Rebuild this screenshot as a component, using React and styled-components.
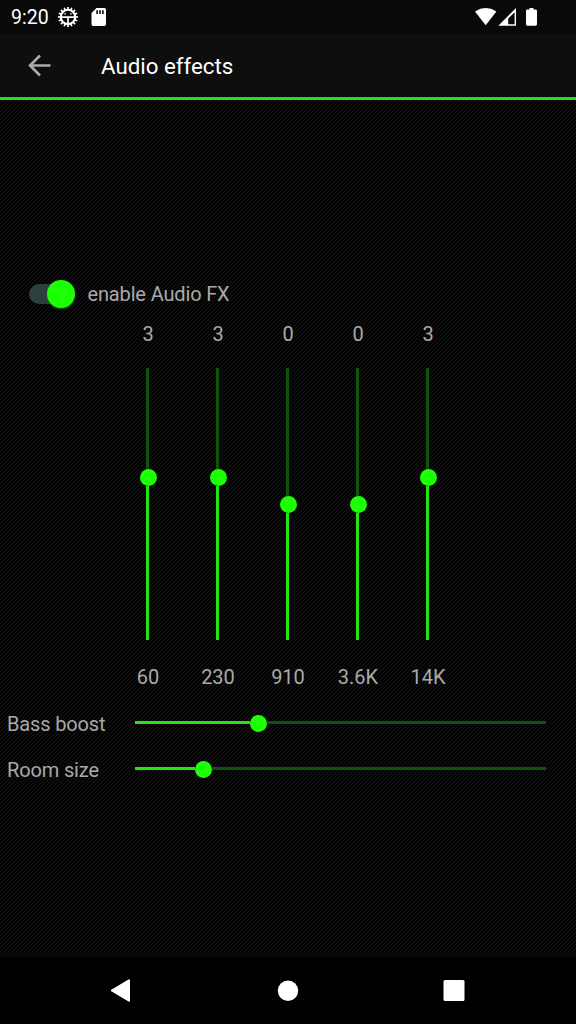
import React from "react";
import styled, { createGlobalStyle } from "styled-components";

const GlobalStyle = createGlobalStyle`
  *, *::before, *::after { box-sizing: border-box; }
  body { margin: 0; background: #000; font-family: Roboto, sans-serif; }
`;

const GREEN = "#1cff05";

const Screen = styled.div`
  display: flex;
  flex-direction: column;
  width: 576px;
  height: 1024px;
  overflow: hidden;
  color: #a9a9a9;
`;

const StatusBar = styled.header`
  display: flex;
  align-items: center;
  justify-content: space-between;
  height: 34px;
  flex: none;
  padding: 0 38px 0 11px;
  background: #090909;
  color: #fff;
`;

const StatusGroup = styled.div`
  display: flex;
  align-items: center;
  svg { display: block; }
`;

const Clock = styled.span`
  width: 46px;
  padding-top: 2px;
  font-size: 19.5px;
  line-height: 32px;
  white-space: nowrap;
`;

const AppBar = styled.div`
  display: flex;
  align-items: center;
  height: 66px;
  flex: none;
  padding-left: 27px;
  background: #0e0e0e;
  border-bottom: 3px solid #29df19;
`;

const BackButton = styled.button`
  width: 74px;
  padding: 0;
  border: 0;
  background: none;
  color: #aaa;
  svg { display: block; }
`;

const Title = styled.h1`
  margin: 0;
  color: #fff;
  font-size: 22.3px;
  font-weight: 400;
  line-height: 30px;
`;

const Content = styled.main`
  flex: 1;
  display: flex;
  flex-direction: column;
  padding-top: 177px;
  background: url("data:image/svg+xml,%3Csvg xmlns='http://www.w3.org/2000/svg' width='4' height='4'%3E%3Cpath d='M-1 1L1-1M0 4L4 0M3 5L5 3' stroke='%23131313' stroke-width='1.1'/%3E%3C/svg%3E") #000;
`;

const SwitchRow = styled.label`
  display: flex;
  align-items: center;
  height: 33px;
  padding-left: 29px;
  font-size: 20px;
`;

const SwitchTrack = styled.span`
  display: flex;
  align-items: center;
  justify-content: flex-end;
  width: 46px;
  height: 20px;
  margin-right: 12.5px;
  border-radius: 10px;
  background: linear-gradient(90deg, #2d403f 0 34px, transparent 34px);
`;

const SwitchThumb = styled.span`
  width: 28px;
  height: 28px;
  border-radius: 50%;
  background: ${GREEN};
  box-shadow: 0 1px 2px rgba(18, 120, 8, 0.8);
`;

const SwitchText = styled.span`
  line-height: 24px;
  padding-top: 1px;
  letter-spacing: -0.15px;
`;

const Equalizer = styled.section`
  display: flex;
  align-self: center;
  margin-top: 12px;
`;

const Band = styled.div`
  display: flex;
  flex-direction: column;
  align-items: center;
  width: 70px;
  font-size: 20px;
  line-height: 24px;
`;

const VerticalSlider = styled.div`
  display: flex;
  flex-direction: column;
  align-items: center;
  width: 17px;
  height: 272px;
  margin: 22px 0 25px;
`;

const HorizontalSlider = styled.div`
  display: flex;
  align-items: center;
  width: 411px;
  height: 17px;
`;

const Track = styled.span`
  flex: ${(p) => (p.$size === undefined ? "1" : `0 0 ${p.$size}px`)};
  ${(p) => (p.$vertical ? "width: 3px; margin-right: 0.6px;" : "height: 3px; margin-bottom: 0.6px;")}
  background: ${(p) => (p.$active ? "#24e516" : "#10520c")};
`;

const Thumb = styled.span`
  flex: none;
  width: 17px;
  height: 17px;
  border-radius: 50%;
  background: ${GREEN};
`;

const EffectList = styled.section`
  display: flex;
  flex-direction: column;
  margin-top: 11px;
`;

const EffectRow = styled.div`
  display: flex;
  align-items: center;
  height: 46px;
`;

const EffectLabel = styled.span`
  width: 135px;
  padding: 1px 0 0 7px;
  font-size: 20px;
  line-height: 24px;
  letter-spacing: -0.15px;
`;

const NavBar = styled.nav`
  display: flex;
  align-items: center;
  justify-content: center;
  height: 67px;
  flex: none;
  background: #000;
`;

const NavButton = styled.button`
  display: flex;
  justify-content: center;
  width: 166px;
  padding: 0;
  border: 0;
  background: none;
`;

const bands = [
  { gain: "3", freq: "60", rest: 101 },
  { gain: "3", freq: "230", rest: 101 },
  { gain: "0", freq: "910", rest: 128 },
  { gain: "0", freq: "3.6K", rest: 128 },
  { gain: "3", freq: "14K", rest: 101 },
];

const effects = [
  { name: "Bass boost", level: 115 },
  { name: "Room size", level: 60 },
];

const teeth = Array.from({ length: 16 }, (_, i) => i * 22.5);

function GearIcon() {
  return (
    <svg width="22" height="22" viewBox="-11 -11 22 22" fill="none" stroke="#fff">
      {teeth.map((a) => (
        <path key={a} d="M0-10V-7" strokeWidth="1.7" transform={`rotate(${a})`} />
      ))}
      <circle r="7.2" strokeWidth="2.1" />
      <path d="M-7 .2H7M0 0V7" strokeWidth="1.7" />
      <path d="M-3.6-3.1h1.5M2.1-3.1h1.5" strokeWidth="1.3" />
    </svg>
  );
}

function SdIcon() {
  return (
    <svg width="16" height="20" viewBox="0 0 16 20">
      <path
        fill="#fff"
        fillRule="evenodd"
        d="M5.5 1H13.4Q15 1 15 2.6V17.3Q15 19 13.4 19H2.1Q.5 19 .5 17.3V6ZM5.3 3.3V7H6.9V3.3ZM8.2 3.3V7H9.8V3.3ZM11.1 3.3V7H12.7V3.3Z"
      />
    </svg>
  );
}

function SignalIcons() {
  return (
    <svg width="63" height="20" viewBox="0 0 63 20" fill="#fff">
      <path d="M0 4.4Q10.7-2.5 21.4 4.4L10.7 18.2Z" />
      <path fillRule="evenodd" d="M41 1V18.7H23.3ZM39.6 5.2L33.2 11.6V17.2H39.6Z" />
      <path d="M54.5 1H58.5V2.6H60.6Q62 2.6 62 4V17.3Q62 18.7 60.6 18.7H52.4Q51 18.7 51 17.3V4Q51 2.6 52.4 2.6H54.5Z" />
    </svg>
  );
}

export default function App() {
  return (
    <Screen>
      <GlobalStyle />
      <StatusBar>
        <StatusGroup>
          <Clock>9:20</Clock>
          <GearIcon />
          <svg width="12" height="1" />
          <SdIcon />
        </StatusGroup>
        <SignalIcons />
      </StatusBar>
      <AppBar>
        <BackButton aria-label="Back">
          <svg width="25" height="25" viewBox="0 0 25 25" fill="none" stroke="currentColor" strokeWidth="2.6">
            <path d="M23.5 12.5H3M13 2.5L3 12.5L13 22.5" />
          </svg>
        </BackButton>
        <Title>Audio effects</Title>
      </AppBar>
      <Content>
        <SwitchRow>
          <SwitchTrack>
            <SwitchThumb />
          </SwitchTrack>
          <SwitchText>enable Audio FX</SwitchText>
        </SwitchRow>
        <Equalizer>
          {bands.map((b) => (
            <Band key={b.freq}>
              <span>{b.gain}</span>
              <VerticalSlider>
                <Track $vertical $size={b.rest} />
                <Thumb />
                <Track $vertical $active />
              </VerticalSlider>
              <span>{b.freq}</span>
            </Band>
          ))}
        </Equalizer>
        <EffectList>
          {effects.map((e) => (
            <EffectRow key={e.name}>
              <EffectLabel>{e.name}</EffectLabel>
              <HorizontalSlider>
                <Track $active $size={e.level} />
                <Thumb />
                <Track />
              </HorizontalSlider>
            </EffectRow>
          ))}
        </EffectList>
      </Content>
      <NavBar>
        <NavButton aria-label="Back">
          <svg width="22" height="24" viewBox="0 0 22 24">
            <path d="M18 1.3V21.7L.8 11.5Z" fill="#fff" stroke="#fff" strokeWidth="2" strokeLinejoin="round" />
          </svg>
        </NavButton>
        <NavButton aria-label="Home">
          <svg width="22" height="24" viewBox="0 0 22 24">
            <circle cx="11" cy="11.7" r="10.2" fill="#fff" />
          </svg>
        </NavButton>
        <NavButton aria-label="Recent apps">
          <svg width="22" height="24" viewBox="0 0 22 24">
            <rect x=".5" y="1" width="21" height="21" rx="1.5" fill="#fff" />
          </svg>
        </NavButton>
      </NavBar>
    </Screen>
  );
}
